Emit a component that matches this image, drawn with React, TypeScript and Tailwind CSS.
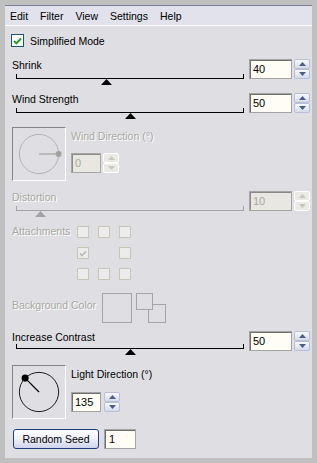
import React from 'react';

const F = "font-['Liberation_Sans',Arial,sans-serif]";
const DIS = "text-[#a8a7a1] [text-shadow:1px_1px_0_#ffffff]";

function Arrow({ up, c }: { up: boolean; c: string }) {
  return (
    <svg width="7" height="4" viewBox="0 0 7 4">
      {up ? <polygon points="3.5,0 7,4 0,4" fill={c} /> : <polygon points="0,0 7,0 3.5,4" fill={c} />}
    </svg>
  );
}

function Spinner({ disabled = false }: { disabled?: boolean }) {
  const c = disabled ? '#c9c8c0' : '#4a5d86';
  const btn = disabled
    ? 'border border-white bg-[#ebeae5]'
    : 'border border-[#b7c0d8] bg-gradient-to-b from-[#f8f9fd] to-[#d6dbea]';
  return (
    <div className="flex flex-col w-[16px] h-[20px]">
      <div className={`h-[10px] flex items-center justify-center rounded-[2px] ${btn}`}>
        <Arrow up c={c} />
      </div>
      <div className={`h-[10px] flex items-center justify-center rounded-[2px] ${btn}`}>
        <Arrow up={false} c={c} />
      </div>
    </div>
  );
}

function NumInput({ value, wide, disabled = false }: { value: string; wide?: boolean; disabled?: boolean }) {
  const w = wide ? 'w-[43px]' : 'w-[30px]';
  const look = disabled
    ? 'border border-[#a6a6a2] bg-[#e8e7e1] shadow-[inset_1px_1px_0_#8a8a8a] text-[#aaa9a3]'
    : 'border border-[#a3a3a3] bg-[#fffdf5] shadow-[inset_1px_1px_0_#6e6e6e] text-black';
  return (
    <div className={`${w} h-[20px] ${look} pl-[3px] flex items-center text-[11px] leading-[12px]`}>{value}</div>
  );
}

function SliderBlock({
  label,
  value,
  pos,
  disabled = false,
  tight = false,
}: {
  label: string;
  value: string;
  pos: number;
  disabled?: boolean;
  tight?: boolean;
}) {
  const track = disabled ? 'border-[#a3a3a3]' : 'border-black';
  const fill = disabled ? '#a3a3a3' : '#000000';
  return (
    <div className="flex h-[34px]">
      <div className="w-[244px] flex flex-col">
        <div className={`h-[12px] leading-[12px] pl-[7px] ${disabled ? DIS : 'text-black'}`}>{label}</div>
        <div className="relative ml-[11px] w-[228px] h-[13px]">
          <div className={`${tight ? 'mt-[1px]' : 'mt-[3px]'} h-[5px] border-l border-r border-b ${track}`} />
          <svg
            className={`absolute ${tight ? 'top-[6px]' : 'top-[8px]'}`}
            style={{ left: pos - 5.5 }}
            width="11"
            height="6"
            viewBox="0 0 11 6"
          >
            <polygon points="5.5,0 11,6 0,6" fill={fill} />
          </svg>
        </div>
      </div>
      <div className="flex gap-[2px] items-start">
        <NumInput value={value} wide disabled={disabled} />
        <Spinner disabled={disabled} />
      </div>
    </div>
  );
}

function Dial({ angle, disabled }: { angle: number; disabled?: boolean }) {
  const cx = 26.5;
  const cy = 26.5;
  const r = 20;
  const rad = (angle * Math.PI) / 180;
  const dx = cx + Math.cos(rad) * r;
  const dy = cy - Math.sin(rad) * r;
  const stroke = disabled ? '#b2b2b2' : '#1a1a1a';
  const hand = disabled ? '#a2a2a2' : '#000000';
  return (
    <div className="w-[54px] h-[54px] border border-t-[#858585] border-l-[#858585] border-b-white border-r-white shrink-0">
      <svg width="52" height="52" viewBox="0 0 53 53">
        <circle cx={cx} cy={cy} r={r} fill="none" stroke={stroke} strokeWidth="1" />
        <line x1={cx} y1={cy} x2={dx} y2={dy} stroke={hand} strokeWidth="1.2" />
        <circle cx={dx} cy={dy} r={disabled ? 3 : 3.6} fill={hand} />
      </svg>
    </div>
  );
}

function SmallBox({ checked }: { checked?: boolean }) {
  return (
    <div className="w-[12px] h-[12px] border border-[#c8c5b6] bg-[#ececec] flex items-center justify-center">
      {checked && (
        <svg width="8" height="7" viewBox="0 0 8 7">
          <polyline points="1,3.5 3,5.5 7,1.5" fill="none" stroke="#b9b8ae" strokeWidth="1.6" />
        </svg>
      )}
    </div>
  );
}

export default function App() {
  return (
    <div className={`w-[317px] h-[463px] bg-[#c0c0c0] pt-[5px] px-[5px] pb-[5px] flex flex-col ${F} text-[10.5px]`}>
      {/* menu bar */}
      <div className="h-[21px] border-t border-t-[#7d7f99] border-b border-b-white bg-[#e1e2eb] flex items-center pl-[5px] gap-[12px] text-black leading-[12px]">
        <span>Edit</span>
        <span>Filter</span>
        <span>View</span>
        <span>Settings</span>
        <span>Help</span>
      </div>

      {/* body */}
      <div className="flex-1 bg-[#dfdfe3] flex flex-col">
        {/* simplified mode */}
        <div className="mt-[8px] pl-[6px] flex items-center gap-[6px]">
          <div className="w-[13px] h-[13px] border border-[#1c5180] bg-white flex items-center justify-center">
            <svg width="9" height="8" viewBox="0 0 9 8">
              <polyline points="1,4 3.4,6.4 8,1.5" fill="none" stroke="#21a121" strokeWidth="2" />
            </svg>
          </div>
          <span className="leading-[12px] text-black">Simplified Mode</span>
        </div>

        <div className="mt-[12px]">
          <SliderBlock label="Shrink" value="40" pos={90} />
        </div>
        <SliderBlock label="Wind Strength" value="50" pos={114} />

        {/* wind direction */}
        <div className="flex pl-[7px] gap-[5px]">
          <Dial angle={0} disabled />
          <div className="flex flex-col pt-[3px]">
            <div className={`h-[12px] leading-[12px] ${DIS}`}>Wind Direction (°)</div>
            <div className="flex gap-[2px] mt-[11px]">
              <NumInput value="0" disabled />
              <Spinner disabled />
            </div>
          </div>
        </div>

        <div className="mt-[10px]">
          <SliderBlock label="Distortion" value="10" pos={24} disabled />
        </div>

        {/* attachments */}
        <div className="flex pl-[7px]">
          <div className={`w-[65px] h-[12px] leading-[12px] ${DIS}`}>Attachments</div>
          <div className="mt-[1px] grid grid-cols-[12px_12px_12px] gap-x-[9px] gap-y-[9px]">
            <SmallBox />
            <SmallBox />
            <SmallBox />
            <SmallBox checked />
            <div />
            <SmallBox />
            <SmallBox />
            <SmallBox />
            <SmallBox />
          </div>
        </div>

        {/* background color */}
        <div className="flex pl-[7px] mt-[13px] h-[30px]">
          <div className={`w-[90px] mt-[6px] h-[12px] leading-[12px] ${DIS}`}>Background Color</div>
          <div className="w-[30px] h-[30px] border border-[#a5a5a5]" />
          <div className="relative w-[30px] h-[30px] ml-[4px]">
            <div className="absolute left-[12px] top-[11px] w-[18px] h-[19px] border border-[#a5a5a5]" />
            <div className="absolute left-0 top-0 w-[17px] h-[17px] border border-[#a5a5a5] bg-[#dfdfe3]" />
          </div>
        </div>

        <div className="mt-[8px]">
          <SliderBlock label="Increase Contrast" value="50" pos={114} tight />
        </div>

        {/* light direction */}
        <div className="flex pl-[7px] gap-[5px]">
          <Dial angle={135} />
          <div className="flex flex-col pt-[3px]">
            <div className="h-[12px] leading-[12px] text-black">Light Direction (°)</div>
            <div className="flex gap-[3px] mt-[12px]">
              <NumInput value="135" />
              <Spinner />
            </div>
          </div>
        </div>

        {/* random seed */}
        <div className="flex pl-[8px] gap-[5px] mt-[10px]">
          <button className="w-[86px] h-[20px] rounded-[3px] border border-[#1e3f7a] bg-gradient-to-b from-[#ffffff] via-[#eef0f8] to-[#cfd4ea] text-black text-[10.5px] leading-[12px] flex items-center justify-center">
            Random Seed
          </button>
          <div className="w-[32px] h-[20px] border border-[#a3a3a3] bg-[#fffdf5] shadow-[inset_1px_1px_0_#6e6e6e] pl-[4px] flex items-center text-[11px] leading-[12px] text-black">
            1
          </div>
        </div>
      </div>
    </div>
  );
}
